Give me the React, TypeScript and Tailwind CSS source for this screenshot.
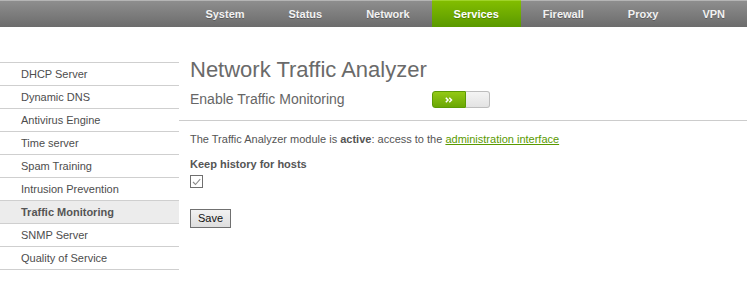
import React from "react";

const tabs = ["System", "Status", "Network", "Services", "Firewall", "Proxy", "VPN"];

const services = [
    "DHCP Server",
    "Dynamic DNS",
    "Antivirus Engine",
    "Time server",
    "Spam Training",
    "Intrusion Prevention",
    "Traffic Monitoring",
    "SNMP Server",
    "Quality of Service",
];

export default function App() {
    return (
        <div className="w-full h-[285px] bg-white font-['Liberation_Sans',Arial,sans-serif] overflow-hidden">
            {/* Top menu */}
            <div className="h-[27px] flex justify-end border-t border-[#b5b5b5] bg-gradient-to-b from-[#8e8e8e] to-[#6c6c6c]">
                {tabs.map((tab) => (
                    <div
                        key={tab}
                        className={`px-[22px] text-[11px] font-bold leading-[26px] [text-shadow:0_1px_0_rgba(0,0,0,0.25)] ${
                            tab === "Services"
                                ? "bg-gradient-to-b from-[#82bd00] to-[#5a9900] text-white border-t border-[#9fd32a] -mt-px"
                                : "text-[#f2f2f2]"
                        }`}
                    >
                        {tab}
                    </div>
                ))}
            </div>

            <div className="flex">
                {/* Sidebar */}
                <div className="w-[179px] pt-[35px]">
                    <ul className="border-t border-[#cfcfcf]">
                        {services.map((item) => (
                            <li
                                key={item}
                                className={`h-[23px] border-b border-[#cfcfcf] pl-[21px] text-[11px] leading-[22px] ${
                                    item === "Traffic Monitoring"
                                        ? "bg-[#ececec] font-bold text-[#555]"
                                        : "text-[#4d4d4d]"
                                }`}
                            >
                                {item}
                            </li>
                        ))}
                    </ul>
                </div>

                {/* Content */}
                <div className="flex-1">
                    <div className="border-b border-[#cccccc] pl-[11px] pt-[30px] pb-[12px]">
                        <h1 className="text-[22px] leading-[26px] text-[#6a6a6a]">Network Traffic Analyzer</h1>
                        <div className="mt-[8px] flex items-center h-[17px]">
                            <span className="w-[242px] text-[14px] leading-[17px] text-[#666]">Enable Traffic Monitoring</span>
                            <div className="flex h-[17px] w-[58px]">
                                <div className="w-[34px] h-full rounded-l-[3px] border border-[#5c9a05] bg-gradient-to-b from-[#93c915] to-[#6aa704] flex items-center justify-center">
                                    <svg width="8" height="6" viewBox="0 0 8 6" fill="none">
                                        <path d="M0.8 0.8 L3 3 L0.8 5.2 M4.3 0.8 L6.5 3 L4.3 5.2" stroke="white" strokeWidth="1.5" />
                                    </svg>
                                </div>
                                <div className="flex-1 h-full rounded-r-[3px] border border-l-0 border-[#bdbdbd] bg-gradient-to-b from-[#f4f4f4] to-[#e3e3e3]" />
                            </div>
                        </div>
                    </div>

                    <div className="pl-[11px]">
                        <p className="mt-[12px] text-[11px] leading-[13px] text-[#555]">
                            The Traffic Analyzer module is <b>active</b>: access to the{" "}
                            <a href="#" className="text-[#5a9a00] underline">administration interface</a>
                        </p>
                        <div className="mt-[12px] text-[11px] leading-[13px] font-bold text-[#555]">Keep history for hosts</div>
                        <div className="mt-[4px] w-[13px] h-[13px] border border-[#6f6f6f] bg-white flex items-center justify-center">
                            <svg width="9" height="8" viewBox="0 0 9 8" fill="none">
                                <path d="M1 4 L3.5 6.5 L8.2 1.2" stroke="#8c8c8c" strokeWidth="1.1" />
                            </svg>
                        </div>
                        <button className="mt-[21px] block w-[41px] h-[19px] border border-[#707070] bg-gradient-to-b from-[#f2f2f2] to-[#dedede] text-[11px] leading-[17px] text-[#111]">
                            Save
                        </button>
                    </div>
                </div>
            </div>
        </div>
    );
}
